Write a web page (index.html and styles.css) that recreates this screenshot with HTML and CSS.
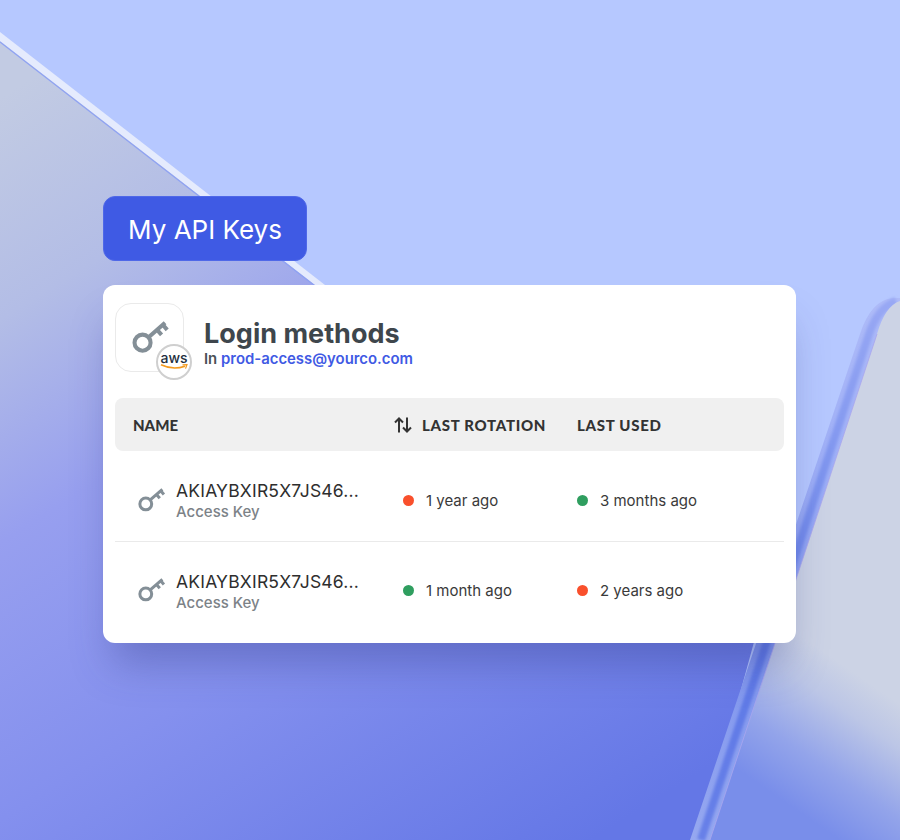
FILE: index.html
```html
<!DOCTYPE html>
<html lang="en">

<head>
  <meta charset="UTF-8">
  <title>My API Keys</title>
  <link rel="stylesheet" href="styles.css">
</head>

<body>
  <svg class="backdrop" width="900" height="840" viewBox="0 0 900 840">
    <defs>
      <linearGradient id="lowerFill" gradientUnits="userSpaceOnUse" x1="60" y1="60" x2="560" y2="860">
        <stop offset="0" stop-color="#c2cbe3" />
        <stop offset="0.2" stop-color="#b3bde6" />
        <stop offset="0.4" stop-color="#979fef" />
        <stop offset="0.65" stop-color="#8490ee" />
        <stop offset="1" stop-color="#6477e6" />
      </linearGradient>
      <linearGradient id="paneFill" gradientUnits="userSpaceOnUse" x1="865" y1="680" x2="782" y2="800">
        <stop offset="0" stop-color="#ccd3e5" />
        <stop offset="0.25" stop-color="#bcc6e6" />
        <stop offset="0.65" stop-color="#93a4ea" />
        <stop offset="1" stop-color="#798eea" />
      </linearGradient>
      <linearGradient id="bandFill" gradientUnits="userSpaceOnUse" x1="0" y1="300" x2="0" y2="840">
        <stop offset="0" stop-color="#aebbf8" />
        <stop offset="0.35" stop-color="#9cadf6" />
        <stop offset="0.65" stop-color="#7f95ee" />
        <stop offset="1" stop-color="#96a8f0" />
      </linearGradient>
      <linearGradient id="bandCore" gradientUnits="userSpaceOnUse" x1="0" y1="300" x2="0" y2="840">
        <stop offset="0" stop-color="#98a8f4" />
        <stop offset="0.35" stop-color="#7c93ee" />
        <stop offset="0.65" stop-color="#5e78e6" />
        <stop offset="1" stop-color="#6780e8" />
      </linearGradient>
      <filter id="soft">
        <feGaussianBlur stdDeviation="1.6" />
      </filter>
    </defs>
    <rect width="900" height="840" fill="#b6c8ff" />
    <polygon points="0,41 760,620 700,840 0,840" fill="url(#lowerFill)" />
    <polygon points="0,32 325,285 315,285 0,41" fill="#e5ebfd" />
    <line x1="0" y1="42" x2="315" y2="286" stroke="#8ea2f3" stroke-width="1.2" />
    <path d="M690 840 L860 334 Q871 300 893 298 L900 298 L900 840 Z" fill="url(#bandFill)" />
    <path d="M701 840 L869 334 Q878 308 896 301" fill="none" stroke="url(#bandCore)" stroke-width="8" filter="url(#soft)" />
    <path d="M710 840 L877 334 Q885 306 900 301 L900 840 Z" fill="url(#paneFill)" />
    <line x1="710" y1="840" x2="877" y2="334" stroke="#a9a6ee" stroke-width="0.8" />
  </svg>

  <div class="page">
    <div class="tag">My API Keys</div>

    <div class="card">
      <div class="card-head">
        <div class="logo-box">
          <svg class="key-big" width="38" height="34" viewBox="0 0 27 24">
            <use href="#key" />
          </svg>
          <div class="aws-badge">
            <span class="aws-word">aws</span>
            <svg class="aws-smile" width="28" height="7" viewBox="0 0 28 7">
              <path d="M1 0.8 Q13 6.5 25 2.2" fill="none" stroke="#f39a1e" stroke-width="1.5" />
              <path d="M22.5 0.8 L27 0.6 L25.5 4.6" fill="none" stroke="#f39a1e" stroke-width="1.2" />
            </svg>
          </div>
        </div>
        <div>
          <div class="card-title">Login methods</div>
          <div class="card-sub">In <span class="account">prod-access@yourco.com</span></div>
        </div>
      </div>

      <div class="table">
        <div class="table-head">
          <div class="name-col">NAME</div>
          <div class="sort-col">
            <svg width="18" height="16" viewBox="0 0 18 16">
              <path d="M5 15.5 V1.5 M1 5.5 L5 1.5 L9 5.5 M13 .5 V14.5 M9 10.5 L13 14.5 L17 10.5" fill="none" stroke="#333" stroke-width="2" />
            </svg>
            LAST ROTATION
          </div>
          <div>LAST USED</div>
        </div>

        <div class="table-row">
          <div class="name-cell">
            <svg class="key-small" width="28" height="25" viewBox="0 0 27 24">
              <defs>
                <g id="key">
                  <circle cx="7.5" cy="15.3" r="5.7" fill="none" stroke="currentColor" stroke-width="2.9" />
                  <path d="M11.8 11.5 L23.5 1.2 M18 6.4 L21 9.8 M21.9 2.6 L25 6.2" fill="none" stroke="currentColor" stroke-width="2.9" />
                </g>
              </defs>
              <use href="#key" />
            </svg>
            <div class="name-text">
              <div class="key-id">AKIAYBXIR5X7JS46...</div>
              <div class="key-type">Access Key</div>
            </div>
          </div>
          <div class="status"><span class="dot red"></span>1 year ago</div>
          <div class="status used"><span class="dot green"></span>3 months ago</div>
        </div>

        <div class="table-row">
          <div class="name-cell">
            <svg class="key-small" width="28" height="25" viewBox="0 0 27 24">
              <use href="#key" />
            </svg>
            <div class="name-text">
              <div class="key-id">AKIAYBXIR5X7JS46...</div>
              <div class="key-type">Access Key</div>
            </div>
          </div>
          <div class="status"><span class="dot green"></span>1 month ago</div>
          <div class="status used"><span class="dot red"></span>2 years ago</div>
        </div>
      </div>
    </div>
  </div>
</body>

</html>
```
FILE: styles.css
```css
* {
  box-sizing: border-box;
}

body {
  margin: 0;
  width: 900px;
  height: 840px;
  overflow: hidden;
  position: relative;
  font-family: Inter, "Liberation Sans", sans-serif;
}

.backdrop {
  position: absolute;
  left: 0;
  top: 0;
}

.page {
  position: relative;
  padding: 196px 104px 0 103px;
}

.tag {
  width: 204px;
  height: 65px;
  padding-top: 1px;
  display: flex;
  align-items: center;
  justify-content: center;
  background: #3f5ae4;
  border: 1px solid #4f68e8;
  border-radius: 12px;
  color: #fff;
  font-size: 26px;
  font-weight: 400;
}

.card {
  margin-top: 24px;
  height: 358px;
  padding: 18px 12px 0 12px;
  background: #fff;
  border-radius: 12px;
  box-shadow: 0 30px 40px -10px rgba(45, 55, 130, 0.35);
}

.card-head {
  display: flex;
  align-items: center;
  gap: 20px;
  height: 69px;
}

.logo-box {
  position: relative;
  width: 69px;
  height: 69px;
  padding: 17px 0 0 16px;
  border: 1.5px solid #eaeaea;
  border-radius: 16px;
}

.key-big {
  display: block;
  color: #848f97;
}

.aws-badge {
  position: absolute;
  right: -9px;
  bottom: -9px;
  width: 36px;
  height: 36px;
  display: flex;
  flex-direction: column;
  align-items: center;
  padding-top: 5px;
  background: #fff;
  border: 2px solid #cfcfcf;
  border-radius: 50%;
}

.aws-word {
  font-size: 14px;
  line-height: 13px;
  font-weight: 500;
  color: #232f3e;
}

.aws-smile {
  display: block;
  flex-shrink: 0;
}

.card-title {
  margin-top: 11px;
  font-size: 27px;
  line-height: 32px;
  font-weight: 700;
  color: #3e464c;
}

.card-sub {
  font-size: 14.9px;
  line-height: 18px;
  font-weight: 600;
  color: #4a5157;
}

.account {
  color: #3f5ae4;
}

.table {
  margin-top: 26px;
}

.table-head,
.table-row {
  display: grid;
  grid-template-columns: 279px 183px 1fr;
  align-items: center;
}

.table-head {
  height: 53px;
  background: #f0f0f0;
  border-radius: 8px;
  font-family: Lato, Inter, sans-serif;
  font-size: 15px;
  font-weight: 900;
  letter-spacing: 0.7px;
  color: #333;
}

.name-col {
  padding-left: 18px;
  letter-spacing: 0;
}

.sort-col {
  display: flex;
  align-items: center;
  gap: 10px;
}

.table-row {
  height: 91px;
  padding-top: 8px;
  border-bottom: 1px solid #eaeaea;
}

.table-row:last-child {
  height: 89px;
  padding-top: 8px;
  border-bottom: none;
}

.name-cell {
  display: flex;
  align-items: center;
  gap: 10px;
  padding-left: 23px;
}

.name-text {
  padding-top: 3px;
}

.key-small {
  display: block;
  color: #848f97;
}

.key-id {
  font-size: 17.5px;
  line-height: 20px;
  color: #2e2e2e;
  letter-spacing: 0.2px;
}

.key-type {
  font-size: 15px;
  line-height: 21px;
  font-weight: 500;
  color: #7c8287;
}

.status {
  display: flex;
  align-items: center;
  gap: 12px;
  padding-left: 9px;
  font-size: 15px;
  color: #3a3a3a;
}

.status.used {
  padding-left: 0;
}

.dot {
  width: 11px;
  height: 11px;
  border-radius: 50%;
}

.red {
  background: #f9502c;
}

.green {
  background: #2f9e5f;
}
```
